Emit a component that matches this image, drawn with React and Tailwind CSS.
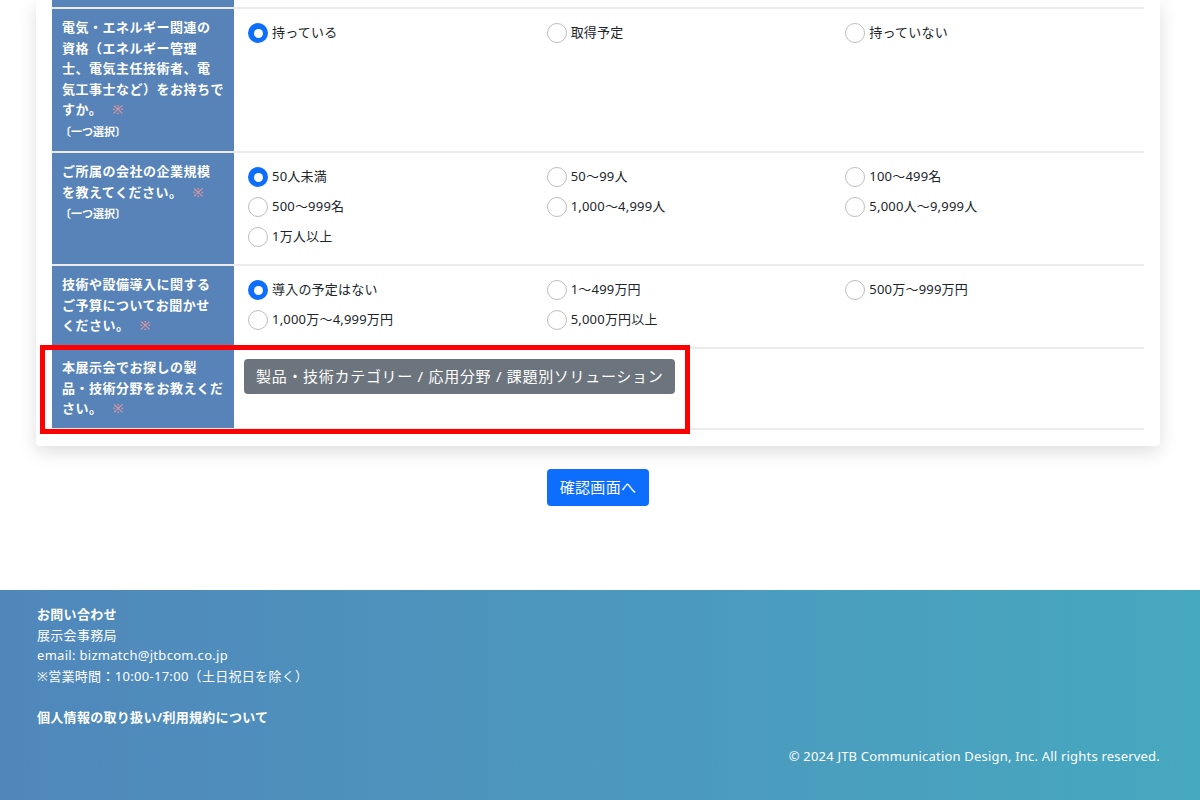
const font = { fontFamily: '"Noto Sans", "Noto Sans CJK JP", sans-serif' };

function Radio({ label, checked }) {
  return (
    <label className="flex items-center gap-[4px] h-[20px] text-[13px] text-[#212529] tracking-[0.2px]">
      {checked ? (
        <span className="w-[20px] h-[20px] rounded-full bg-[#0d6efd] flex items-center justify-center shrink-0">
          <span className="w-[9px] h-[9px] rounded-full bg-white" />
        </span>
      ) : (
        <span className="w-[20px] h-[20px] rounded-full border border-[#bdbdbd] bg-white shrink-0" />
      )}
      <span>{label}</span>
    </label>
  );
}

// header cell: lines are given explicitly so the wrap matches
function Head({ lines, pick }) {
  return (
    <div className={"w-[182px] shrink-0 bg-[#5783b8] px-[10px] pt-[8px] text-white text-[13px] font-bold leading-[20.5px] tracking-[0.5px] " + (pick ? "pb-[9px]" : "pb-[11px]")}>
      {lines.map((l, i) => (
        <div key={i} className="whitespace-nowrap">
          {l}
          {i === lines.length - 1 && <span className="text-[#f29a9a] font-normal ml-[10px]">※</span>}
        </div>
      ))}
      {pick && <div className="text-[11px] mt-[2px] -ml-[2px] tracking-normal">〔一つ選択〕</div>}
    </div>
  );
}

function Options({ items }) {
  return (
    <div className="grid grid-cols-3 gap-y-[10px] pl-[14px] pt-[14px] pb-[17px]">
      {items.map((it, i) => (
        <Radio key={i} label={it} checked={i === 0} />
      ))}
    </div>
  );
}

export default function App() {
  return (
    <div className="min-h-screen bg-white flex flex-col" style={font}>
      <div className="w-[1124px] ml-[36px] bg-white rounded-b-[4px] shadow-[0_6px_18px_rgba(0,0,0,0.13)] px-[16px] pb-[16px]">
        <div className="flex h-[9px] border-b-2 border-[#ebebeb]">
          <div className="w-[182px] bg-[#5783b8]" />
        </div>

        <div className="flex border-b-2 border-[#ebebeb]">
          <Head
            pick
            lines={["電気・エネルギー関連の", "資格（エネルギー管理", "士、電気主任技術者、電", "気工事士など）をお持ちで", "すか。"]}
          />
          <div className="flex-1">
            <Options items={["持っている", "取得予定", "持っていない"]} />
          </div>
        </div>

        <div className="flex border-b-2 border-[#ebebeb]">
          <Head pick lines={["ご所属の会社の企業規模", "を教えてください。"]} />
          <div className="flex-1">
            <Options
              items={[
                "50人未満",
                "50〜99人",
                "100〜499名",
                "500〜999名",
                "1,000〜4,999人",
                "5,000人〜9,999人",
                "1万人以上",
              ]}
            />
          </div>
        </div>

        <div className="flex border-b-2 border-[#ebebeb]">
          <Head lines={["技術や設備導入に関する", "ご予算についてお聞かせ", "ください。"]} />
          <div className="flex-1">
            <Options
              items={[
                "導入の予定はない",
                "1〜499万円",
                "500万〜999万円",
                "1,000万〜4,999万円",
                "5,000万円以上",
              ]}
            />
          </div>
        </div>

        <div className="relative flex border-b-2 border-[#ebebeb] h-[81px]">
          <Head lines={["本展示会でお探しの製", "品・技術分野をお教えくだ", "さい。"]} />
          <div className="flex-1 pl-[10px] pt-[10px]">
            <button className="h-[35px] px-[12px] rounded-[4px] bg-[#6c757d] text-white text-[15px] tracking-[0.7px]">
              製品・技術カテゴリー / 応用分野 / 課題別ソリューション
            </button>
          </div>
          <div className="absolute left-[-12px] top-[-4px] w-[650px] h-[89px] border-[5px] border-[#ff0000] pointer-events-none" />
        </div>
      </div>

      <div className="flex justify-center ml-[-4px] mt-[23px]">
        <button className="h-[37px] px-[13px] rounded-[4px] bg-[#0d6efd] text-white text-[15px] tracking-[0.3px]">
          確認画面へ
        </button>
      </div>

      <footer className="mt-[84px] h-[212px] bg-linear-to-r from-[#5087bb] to-[#46a8bf] text-white text-[13px] px-[37px] pt-[14px] leading-[20.5px] tracking-[0.3px]">
        <div className="font-bold">お問い合わせ</div>
        <div>展示会事務局</div>
        <div>email: bizmatch@jtbcom.co.jp</div>
        <div>※営業時間：10:00-17:00（土日祝日を除く）</div>
        <div className="font-bold mt-[20.5px]">個人情報の取り扱い/利用規約について</div>
        <div className="text-right pr-[3px] mt-[19px] tracking-[0.2px]">© 2024 JTB Communication Design, Inc. All rights reserved.</div>
      </footer>
    </div>
  );
}
